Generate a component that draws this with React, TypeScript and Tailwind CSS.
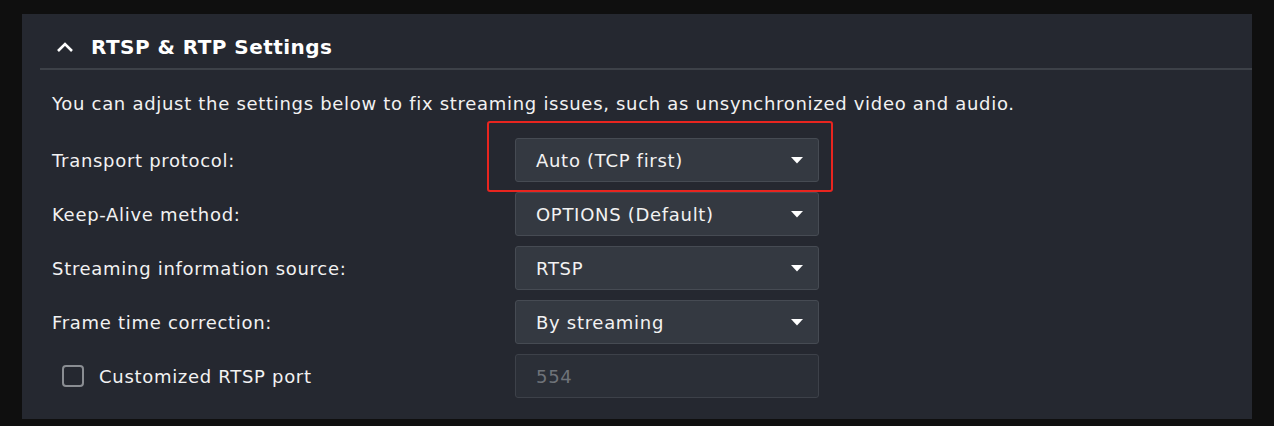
import React from "react";

const rows = [
  { label: "Transport protocol:", value: "Auto (TCP first)" },
  { label: "Keep-Alive method:", value: "OPTIONS (Default)" },
  { label: "Streaming information source:", value: "RTSP" },
  { label: "Frame time correction:", value: "By streaming" },
];

function Caret() {
  return (
    <svg width="12" height="7" viewBox="0 0 12 7" className="shrink-0">
      <path d="M0 0 L12 0 L6 6.5 Z" fill="#ffffff" />
    </svg>
  );
}

export default function App() {
  return (
    <div
      className="w-[1274px] h-[426px] bg-[#0f0f0f] pt-[14px] pl-[22px]"
      style={{ fontFamily: '"DejaVu Sans", Verdana, sans-serif' }}
    >
      <div className="w-[1230px] h-[405px] bg-[#252830] pl-[18px]">
        <div className="flex items-center h-[56px] pt-[12px] border-b-2 border-[#3d4148] pl-[16px]">
          <svg width="18" height="10" viewBox="0 0 18 10" className="mr-[17px]">
            <path d="M2 9 L9 2 L16 9" stroke="#ffffff" strokeWidth="2.6" fill="none" />
          </svg>
          <h1 className="text-[20px] font-bold text-white tracking-[0.45px]">RTSP &amp; RTP Settings</h1>
        </div>
        <div className="pl-[12px] pt-[23px] text-[18px] tracking-[0.7px] text-[#f2f2f2]">
          <p className="h-[22px] leading-[22px]">
            You can adjust the settings below to fix streaming issues, such as unsynchronized video and audio.
          </p>
          <div className="flex flex-col gap-[10px] mt-[23px]">
            {rows.map((r, i) => (
              <div key={r.label} className="relative flex items-center h-[44px]">
                <div className="w-[463px]">{r.label}</div>
                <div className="w-[304px] h-[44px] bg-[#343941] border border-[#464b53] rounded-[3px] flex items-center justify-between pl-[20px] pr-[15px]">
                  <span>{r.value}</span>
                  <Caret />
                </div>
                {i === 0 && (
                  <div className="absolute left-[435px] top-[-17px] w-[346px] h-[71px] border-2 border-[#e8251f] rounded-[3px]" />
                )}
              </div>
            ))}
            <div className="flex items-center h-[44px]">
              <div className="w-[463px] flex items-center pl-[10px]">
                <div className="w-[22px] h-[22px] border-2 border-[#8a8d92] rounded-[4px] mr-[15px]" />
                <span>Customized RTSP port</span>
              </div>
              <div className="w-[304px] h-[44px] bg-[#2b2f37] border border-[#3d4149] rounded-[3px] flex items-center pl-[20px] text-[#6f7379]">
                554
              </div>
            </div>
          </div>
        </div>
      </div>
    </div>
  );
}
